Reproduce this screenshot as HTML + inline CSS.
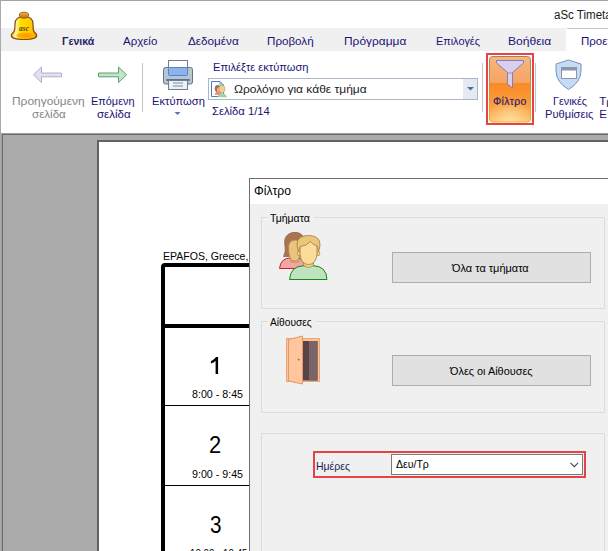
<!DOCTYPE html>
<html><head><meta charset="utf-8"><style>
html,body{margin:0;padding:0;}
body{width:608px;height:551px;overflow:hidden;position:relative;background:#fff;font-family:"Liberation Sans", sans-serif;}
.a{position:absolute;}
.t{position:absolute;white-space:nowrap;line-height:1;transform-origin:0 0;z-index:20;}

</style></head><body>
<!-- window chrome -->
<div class="a" style="left:0;top:0;width:608px;height:1px;background:#a4a4a4"></div>
<div class="a" style="left:0;top:0;width:1px;height:134px;background:#a8acb0"></div>
<!-- tab strip -->
<div class="a" style="left:1px;top:28px;width:565px;height:23px;background:#f0f0f0"></div>
<div class="a" style="left:567px;top:28px;width:41px;height:1px;background:#c8c8c8"></div>
<!-- ribbon -->
<svg class="a" style="left:0;top:0;z-index:5" width="608" height="134" viewBox="0 0 608 134">
  <!-- bell logo -->
  <defs>
    <linearGradient id="bellg" x1="0" y1="0" x2="1" y2="0">
      <stop offset="0" stop-color="#f5c800"/>
      <stop offset="0.18" stop-color="#fff6b0"/>
      <stop offset="0.35" stop-color="#ffe000"/>
      <stop offset="0.8" stop-color="#ffc800"/>
      <stop offset="1" stop-color="#e8a000"/>
    </linearGradient>
    <radialGradient id="bellb" cx="0.55" cy="0.5" r="0.5">
      <stop offset="0" stop-color="#ff9400"/>
      <stop offset="1" stop-color="#ffb400"/>
    </radialGradient>
    <linearGradient id="knobg" x1="0" y1="0" x2="0" y2="1">
      <stop offset="0" stop-color="#f0b040"/>
      <stop offset="1" stop-color="#c07010"/>
    </linearGradient>
  </defs>
  <path d="M15,24 Q15,16.5 24,16.5 Q33,16.5 33,24 L33.3,30 Q34.2,32.5 36.2,34 Q37.6,36.2 35,37.9 Q31,39.5 24,39.5 Q17,39.5 13,37.9 Q10.4,36.2 11.8,34 Q13.8,32.5 14.7,30 Z" fill="url(#bellg)" stroke="#8a4810" stroke-width="1.2"/>
  <ellipse cx="25" cy="35.6" rx="8.5" ry="3.2" fill="url(#bellb)"/>
  <ellipse cx="24" cy="15.2" rx="4.6" ry="3" fill="url(#knobg)" stroke="#8a4a10" stroke-width="0.8"/>
  <text x="24" y="31" font-family="Liberation Serif" font-style="italic" font-weight="700" font-size="7.5" fill="#6a3a12" text-anchor="middle">asc</text>
  <!-- prev arrow -->
  <path d="M33.5,74.8 L41.5,67 L41.5,73 L61.5,73 L61.5,76.8 L41.5,76.8 L41.5,82.6 Z" fill="#e1e0ef" stroke="#b2b0ca" stroke-width="1"/>
  <!-- next arrow -->
  <path d="M126.5,74.8 L118.5,67 L118.5,73 L98.5,73 L98.5,76.8 L118.5,76.8 L118.5,82.6 Z" fill="#c2e5c8" stroke="#5c9f70" stroke-width="1"/>
  <rect x="142" y="63" width="1" height="49" fill="#c4c4c4"/>
  <!-- printer -->
  <rect x="168.5" y="60.5" width="19" height="8" fill="#fff" stroke="#6e7f96"/>
  <rect x="163.5" y="67.5" width="29" height="16.5" rx="2" fill="#b6c4d8" stroke="#60748f"/>
  <rect x="168.5" y="67.5" width="19" height="8" rx="1" fill="#8db3ef" stroke="#5a80c6"/>
  <circle cx="190" cy="71.7" r="1" fill="#f4d34a"/>
  <rect x="166" y="79" width="24" height="2" rx="1" fill="#60748f"/>
  <rect x="168.5" y="80.5" width="19" height="9" fill="#eef2f7" stroke="#6e7f96"/>
  <rect x="173" y="82.5" width="10" height="1" fill="#7f8ea3"/>
  <rect x="173" y="85.5" width="10" height="1" fill="#7f8ea3"/>
  <!-- printer dropdown arrow -->
  <path d="M174.5,112 L180.5,112 L177.5,115 Z" fill="#5a76a8"/>
  <!-- combo -->
  <rect x="208.5" y="78.5" width="269" height="21" fill="#fff" stroke="#abb7c7"/>
  <rect x="463" y="79" width="14" height="20" fill="#e4e9f2"/>
  <path d="M467,87 L474,87 L470.5,90.5 Z" fill="#4a6ea8"/>
  <!-- combo icon -->
  <path d="M211.5,81.5 L220,81.5 L223.5,85 L223.5,96.5 L211.5,96.5 Z" fill="#fff" stroke="#3f7fd0"/>
  <path d="M219.8,81.8 L219.8,85.2 L223.2,85.2 Z" fill="#cfe3f7" stroke="#3f7fd0" stroke-width="0.6"/>
  <ellipse cx="217.6" cy="88.6" rx="2.9" ry="3.6" fill="#a87050"/>
  <ellipse cx="218.8" cy="89.8" rx="1.9" ry="2.6" fill="#e6be7c"/>
  <path d="M214.5,94.8 Q215.2,91.8 218.5,91.8 L221,91.8 L221,94.8 Z" fill="#f08484"/>
  <ellipse cx="222" cy="89" rx="3" ry="3.8" fill="#f2d08e" stroke="#b89456" stroke-width="0.5"/>
  <path d="M217.8,97 Q218.5,93.6 222,93.6 Q225.7,93.6 226.6,97 Z" fill="#a6d9a6" stroke="#78b878" stroke-width="0.4"/>
  <rect x="482" y="63" width="1" height="49" fill="#c4c4c4"/>
  <!-- filter button -->
  <rect x="487" y="54" width="46" height="70" fill="none" stroke="#e44444" stroke-width="2"/>
  <defs>
    <linearGradient id="og" x1="0" y1="0" x2="0" y2="1">
      <stop offset="0" stop-color="#f8b67e"/>
      <stop offset="0.40" stop-color="#f6a466"/>
      <stop offset="0.41" stop-color="#f98a26"/>
      <stop offset="0.75" stop-color="#fb9e3c"/>
      <stop offset="1" stop-color="#fcc072"/>
    </linearGradient>
    <radialGradient id="oglow" cx="0.5" cy="1" r="0.6">
      <stop offset="0" stop-color="#fde0a0" stop-opacity="0.95"/>
      <stop offset="1" stop-color="#fde0a0" stop-opacity="0"/>
    </radialGradient>
    <linearGradient id="ob" x1="0" y1="0" x2="0" y2="1">
      <stop offset="0" stop-color="#9c8660"/>
      <stop offset="0.45" stop-color="#d09040"/>
      <stop offset="1" stop-color="#f4b020"/>
    </linearGradient>
  </defs>
  <rect x="489.5" y="56.5" width="41" height="65.5" rx="3" fill="url(#og)" stroke="url(#ob)"/>
  <rect x="490" y="84" width="40" height="37.5" rx="2" fill="url(#oglow)"/>
  <path d="M496.5,60.5 L523.5,60.5 L523.5,63 L512.5,72.5 L512.5,88 L507.5,84 L507.5,72.5 L496.5,63 Z" fill="#d9d0f0" stroke="#8a7cb8"/>
  <path d="M507.5,73 L512.5,73" stroke="#8a7cb8" stroke-width="0.8"/>
  <rect x="535" y="63" width="1" height="49" fill="#c4c4c4"/>
  <!-- shield -->
  <path d="M568.5,60 L581,64 L581,71 Q581,82 568.5,89.5 Q556,82 556,71 L556,64 Z" fill="#c6dcf4" stroke="#7393c0"/>
  <rect x="561.5" y="67.5" width="15" height="11" fill="#fff" stroke="#8b97a8"/>
  <rect x="561.5" y="67.5" width="15" height="3" fill="#8b97a8"/>
</svg>
<!-- gray work area -->
<div class="a" style="left:0;top:133px;width:608px;height:418px;background:#a0a0a0"></div>
<div class="a" style="left:2px;top:134px;width:606px;height:417px;background:#6a6a6a"></div>
<div class="a" style="left:3px;top:135px;width:605px;height:416px;background:#ababab"></div>
<div class="a" style="left:0;top:133px;width:1px;height:418px;background:#a8acb0"></div>
<!-- page -->
<div class="a" style="left:97px;top:140px;width:511px;height:411px;background:#626262"></div>
<div class="a" style="left:99px;top:142px;width:509px;height:409px;background:#fff"></div>
<svg class="a" style="left:0;top:0;z-index:6" width="608" height="551" viewBox="0 0 608 551">
  <path d="M161,551 L161,267 Q161,263 165,263 L249,263 L249,267 L165,267 L165,551 Z" fill="#000"/>
  <rect x="165" y="324" width="84" height="4" fill="#000"/>
  <rect x="165" y="405" width="84" height="1" fill="#000"/>
  <rect x="165" y="485" width="84" height="1" fill="#000"/>
  <path d="M216,357 L218.1,357 L218.1,374 L215.6,374 L215.6,361 Q213.8,362.6 210.9,363.6 L210.9,361.3 Q214.4,359.6 216,357 Z" fill="#000"/>
</svg>
<!-- dialog -->
<div class="a" style="left:249px;top:178px;width:359px;height:373px;background:#6e6e6e;z-index:10"></div>
<div class="a" style="left:250px;top:179px;width:358px;height:372px;background:#f0f0f0;z-index:10"></div>
<div class="a" style="left:250px;top:179px;width:358px;height:25px;background:#fff;z-index:10"></div>
<svg class="a" style="left:0;top:0;z-index:12" width="608" height="551" viewBox="0 0 608 551">
  <!-- group boxes -->
  <path d="M267.5,217.5 L261.5,217.5 L261.5,308.5 L604.5,308.5 L604.5,217.5 L314,217.5" fill="none" stroke="#dcdcdc"/>
  <path d="M267.5,321.5 L261.5,321.5 L261.5,412.5 L604.5,412.5 L604.5,321.5 L316,321.5" fill="none" stroke="#dcdcdc"/>
  <path d="M261.5,551 L261.5,433.5 L604.5,433.5 L604.5,551" fill="none" stroke="#dcdcdc"/>
  <!-- buttons -->
  <rect x="392.5" y="252.5" width="198" height="30" fill="#e1e1e1" stroke="#adadad"/>
  <rect x="392.5" y="355.5" width="198" height="30" fill="#e1e1e1" stroke="#adadad"/>
  <!-- people icon -->
  <path d="M279.5,268.5 Q280.5,258 291,257.8 L297,257.8 Q304,258.5 305,268.5 Z" fill="#f4a4a4" stroke="#c42424"/>
  <path d="M283.5,256.5 Q286,252 285,246 Q283.5,238 288,234.5 Q292,231.5 297,232.5 Q303,233.5 304.5,240 L304.5,256 Z" fill="#a97450" stroke="#8e5c3a" stroke-width="0.7"/>
  <rect x="291" y="256" width="8" height="6" fill="#e6bd78" stroke="#a8844a" stroke-width="0.7"/>
  <path d="M288.5,248 Q288.5,240 295,240 Q301,240 301,248 L300.5,254 Q299,261 294.5,261 Q290,261 289,254 Z" fill="#eac47e" stroke="#a8844a" stroke-width="0.8"/>
  <path d="M289.5,279.5 Q290.5,266 304,265.7 L313,265.7 Q326.5,266 327,279.5 Z" fill="#bfe3bf" stroke="#168816"/>
  <path d="M303.5,259 L303.5,265 Q308.5,270 313.5,265 L313.5,259 Z" fill="#f4d08a" stroke="#a8844a" stroke-width="0.8"/>
  <ellipse cx="298.8" cy="253.5" rx="1.6" ry="2.2" fill="#f4d08a" stroke="#a8844a" stroke-width="0.7"/>
  <ellipse cx="318.2" cy="253.5" rx="1.6" ry="2.2" fill="#f4d08a" stroke="#a8844a" stroke-width="0.7"/>
  <path d="M300,247 Q300,240 308.5,240 Q317,240 317,247 L317,254 Q316,264.5 308.5,264.5 Q301,264.5 300,254 Z" fill="#fbdc9a" stroke="#a8844a" stroke-width="0.9"/>
  <path d="M298.5,252 Q296,245 297.5,241 Q300,235.5 308.5,235.5 Q317,235.5 319.5,241 Q321,245 318.5,252 L317.5,246 Q313,245 310.5,241.5 Q306,246.5 300,246.5 Z" fill="#ecc47a" stroke="#a8844a" stroke-width="0.9"/>
  <!-- door icon -->
  <rect x="286.5" y="338.5" width="33" height="43" fill="#ffc192" stroke="#e8a878"/>
  <rect x="303" y="341" width="14.5" height="39.5" fill="#584448"/>
  <rect x="309" y="341" width="8.5" height="39.5" fill="#7a6468"/>
  <path d="M288.5,339.5 L302.5,336 L302.5,384 L288.5,381 Z" fill="#ffc59c" stroke="#de9a6a"/>
  <circle cx="298.7" cy="359.6" r="0.9" fill="#a06040"/>
  <!-- red highlight + combo -->
  <rect x="314" y="452" width="271" height="25" fill="none" stroke="#e44444" stroke-width="2"/>
  <rect x="391.5" y="454.5" width="191" height="20" fill="#fff" stroke="#7a7a7a"/>
  <path d="M570.5,462.8 L574.3,466.6 L578.1,462.8" fill="none" stroke="#444" stroke-width="1.1"/>
</svg>

<div class="t" style="left:554.30px;top:8.84px;font-size:12.00px;color:#1a1a1a;font-weight:400;transform:scaleX(0.9604);">aSc Timetables</div>
<div class="t" style="left:61.80px;top:36.27px;font-size:11.50px;color:#1f236a;font-weight:700;transform:scaleX(0.9241);">Γενικά</div>
<div class="t" style="left:123.00px;top:36.27px;font-size:11.50px;color:#1a1276;font-weight:400;transform:scaleX(0.9992);">Αρχείο</div>
<div class="t" style="left:187.50px;top:36.27px;font-size:11.50px;color:#1a1276;font-weight:400;transform:scaleX(1.0188);">Δεδομένα</div>
<div class="t" style="left:267.40px;top:36.27px;font-size:11.50px;color:#1a1276;font-weight:400;transform:scaleX(1.0089);">Προβολή</div>
<div class="t" style="left:343.70px;top:36.27px;font-size:11.50px;color:#1a1276;font-weight:400;transform:scaleX(1.0367);">Πρόγραμμα</div>
<div class="t" style="left:435.50px;top:36.27px;font-size:11.50px;color:#1a1276;font-weight:400;transform:scaleX(0.9428);">Επιλογές</div>
<div class="t" style="left:508.10px;top:36.27px;font-size:11.50px;color:#1a1276;font-weight:400;transform:scaleX(1.0509);">Βοήθεια</div>
<div class="t" style="left:581.00px;top:36.27px;font-size:11.50px;color:#1a1276;font-weight:400;">Προεπισκόπηση</div>
<div class="t" style="left:11.80px;top:96.27px;font-size:11.50px;color:#858585;font-weight:400;transform:scaleX(1.0374);">Προηγούμενη</div>
<div class="t" style="left:31.50px;top:109.27px;font-size:11.50px;color:#858585;font-weight:400;transform:scaleX(1.0061);">σελίδα</div>
<div class="t" style="left:90.90px;top:96.27px;font-size:11.50px;color:#1a1276;font-weight:400;transform:scaleX(0.9476);">Επόμενη</div>
<div class="t" style="left:96.80px;top:109.27px;font-size:11.50px;color:#1a1276;font-weight:400;transform:scaleX(1.0032);">σελίδα</div>
<div class="t" style="left:151.80px;top:96.27px;font-size:11.50px;color:#1a1276;font-weight:400;transform:scaleX(0.9706);">Εκτύπωση</div>
<div class="t" style="left:213.00px;top:62.27px;font-size:11.50px;color:#1a1276;font-weight:400;transform:scaleX(0.9635);">Επιλέξτε εκτύπωση</div>
<div class="t" style="left:233.60px;top:84.27px;font-size:11.50px;color:#1a1a1a;font-weight:400;transform:scaleX(1.0436);">Ωρολόγιο για κάθε τμήμα</div>
<div class="t" style="left:212.10px;top:106.27px;font-size:11.50px;color:#1a1276;font-weight:400;transform:scaleX(0.9768);">Σελίδα 1/14</div>
<div class="t" style="left:493.00px;top:96.27px;font-size:11.50px;color:#2a2070;font-weight:400;letter-spacing:0.4px;-webkit-text-stroke:0.2px #2a2070;transform:scaleX(0.8990);">Φίλτρο</div>
<div class="t" style="left:553.00px;top:96.27px;font-size:11.50px;color:#1a1276;font-weight:400;transform:scaleX(0.9396);">Γενικές</div>
<div class="t" style="left:545.40px;top:109.27px;font-size:11.50px;color:#1a1276;font-weight:400;transform:scaleX(0.9687);">Ρυθμίσεις</div>
<div class="t" style="left:599.20px;top:96.27px;font-size:11.50px;color:#1a1276;font-weight:400;">Τρ</div>
<div class="t" style="left:599.20px;top:109.27px;font-size:11.50px;color:#1a1276;font-weight:400;">Ε</div>
<div class="t" style="left:163.30px;top:250.86px;font-size:10.80px;color:#000;font-weight:400;transform:scaleX(0.9770);">EPAFOS, Greece,</div>
<div class="t" style="left:192.00px;top:390.37px;font-size:10.20px;color:#000;font-weight:400;transform:scaleX(1.0468);">8:00 - 8:45</div>
<div class="t" style="left:209.10px;top:434.11px;font-size:23.50px;color:#000;font-weight:400;transform:scaleX(0.9329);">2</div>
<div class="t" style="left:191.80px;top:470.37px;font-size:10.20px;color:#000;font-weight:400;transform:scaleX(1.0468);">9:00 - 9:45</div>
<div class="t" style="left:209.70px;top:514.11px;font-size:23.50px;color:#000;font-weight:400;transform:scaleX(0.8793);">3</div>
<div class="t" style="left:189.50px;top:549.37px;font-size:10.20px;color:#000;font-weight:400;transform:scaleX(0.9576);">10:00 - 10:45</div>
<div class="t" style="left:253.60px;top:184.84px;font-size:12.00px;color:#000;font-weight:400;transform:scaleX(1.0141);">Φίλτρο</div>
<div class="t" style="left:270.20px;top:213.11px;font-size:10.50px;color:#000;font-weight:400;transform:scaleX(1.0017);">Τμήματα</div>
<div class="t" style="left:452.10px;top:262.69px;font-size:11.00px;color:#000;font-weight:400;transform:scaleX(0.9971);">Όλα τα τμήματα</div>
<div class="t" style="left:270.30px;top:317.11px;font-size:10.50px;color:#000;font-weight:400;transform:scaleX(0.9701);">Αίθουσες</div>
<div class="t" style="left:449.50px;top:365.69px;font-size:11.00px;color:#000;font-weight:400;transform:scaleX(0.9901);">Όλες οι Αίθουσες</div>
<div class="t" style="left:316.00px;top:460.69px;font-size:11.00px;color:#1a1c5a;font-weight:400;transform:scaleX(0.9535);">Ημέρες</div>
<div class="t" style="left:395.90px;top:458.69px;font-size:11.00px;color:#000;font-weight:400;transform:scaleX(0.9559);">Δευ/Τρ</div>
</body></html>
